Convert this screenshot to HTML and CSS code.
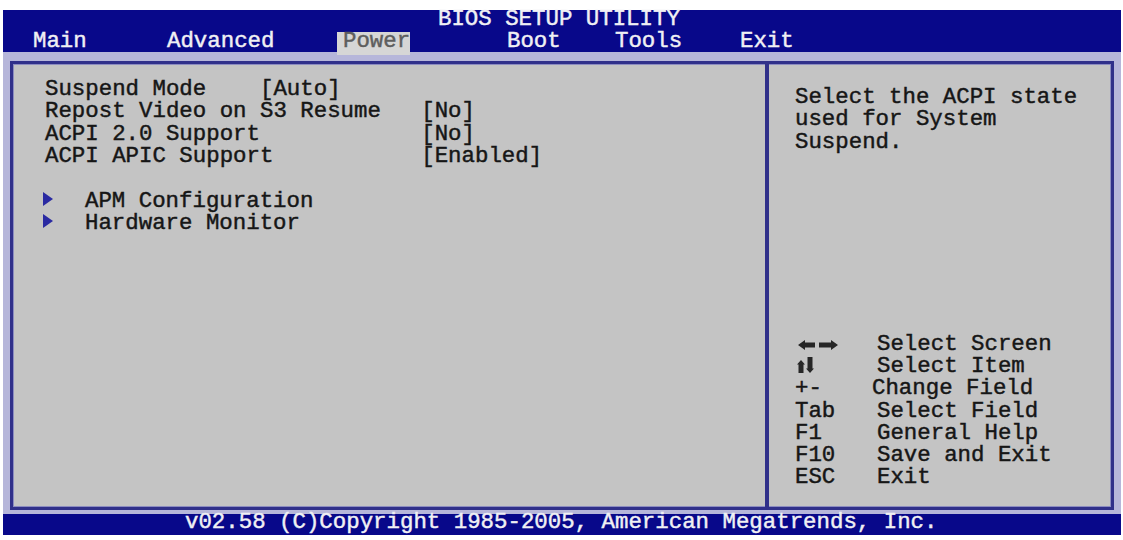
FILE: index.html
```html
<!DOCTYPE html>
<html lang="en">
<head>
    <meta charset="UTF-8">
    <meta name="viewport" content="width=device-width, initial-scale=1.0">
    <title>BIOS Setup Utility - Power</title>
    <link rel="stylesheet" href="styles.css">
</head>
<body>
    <div class="screen">
        <header class="topbar">
            <div class="title">BIOS SETUP UTILITY</div>
            <nav class="menu">
                <span class="tab tab-main">Main</span>
                <span class="tab tab-advanced">Advanced</span>
                <span class="tab tab-power active">Power</span>
                <span class="tab tab-boot">Boot</span>
                <span class="tab tab-tools">Tools</span>
                <span class="tab">Exit</span>
            </nav>
        </header>

        <div class="frame">
            <section class="options">
                <div class="opt"><span class="opt-label short">Suspend Mode</span><span>[Auto]</span></div>
                <div class="opt"><span class="opt-label">Repost Video on S3 Resume</span><span>[No]</span></div>
                <div class="opt"><span class="opt-label">ACPI 2.0 Support</span><span>[No]</span></div>
                <div class="opt"><span class="opt-label">ACPI APIC Support</span><span>[Enabled]</span></div>
                <div class="opt blank"></div>
                <div class="submenu">
                    <svg class="pointer" width="10" height="14" viewBox="0 0 10 14"><polygon points="0,0 10,7 0,14"/></svg>
                    <span>APM Configuration</span>
                </div>
                <div class="submenu">
                    <svg class="pointer" width="10" height="14" viewBox="0 0 10 14"><polygon points="0,0 10,7 0,14"/></svg>
                    <span>Hardware Monitor</span>
                </div>
            </section>

            <aside class="help">
                <p class="help-text">Select the ACPI state used for System Suspend.</p>

                <div class="keys">
                    <span class="key">
                        <svg class="glyph lr" width="40" height="10" viewBox="0 0 40 10">
                            <polygon points="0,5 7,0 7,2.5 17,2.5 17,7.5 7,7.5 7,10"/>
                            <polygon points="40,5 33,0 33,2.5 21,2.5 21,7.5 33,7.5 33,10"/>
                        </svg>
                    </span>
                    <span>Select Screen</span>
                    <span class="key">
                        <svg class="glyph ud" width="17" height="17" viewBox="0 0 17 17">
                            <polygon points="4,3 8,7.5 6.5,7.5 6.5,16 1.5,16 1.5,7.5 0,7.5"/>
                            <polygon points="13,16 17,11.5 15.5,11.5 15.5,0 10.5,0 10.5,11.5 9,11.5"/>
                        </svg>
                    </span>
                    <span>Select Item</span>
                    <span class="key">+-</span>
                    <span class="shift">Change Field</span>
                    <span class="key">Tab</span>
                    <span>Select Field</span>
                    <span class="key">F1</span>
                    <span>General Help</span>
                    <span class="key">F10</span>
                    <span>Save and Exit</span>
                    <span class="key">ESC</span>
                    <span>Exit</span>
                </div>
            </aside>
        </div>

        <footer class="statusbar">v02.58 (C)Copyright 1985-2005, American Megatrends, Inc.</footer>
    </div>
</body>
</html>
```

FILE: styles.css
```css
body {
    margin: 0;
    background: #ffffff;
    font-family: "Liberation Mono", "Courier New", monospace;
    font-size: 22.4px;
    color: #161616;
    /* a little heavier than the regular face, lighter than bold */
    -webkit-text-stroke: 0.45px currentColor;
}

.screen {
    margin: 10px 2px 0 3px;
    width: 1118px;
    height: 525px;
    background: #b6b6da;
    display: flex;
    flex-direction: column;
}

/* top title + menu bar */
.topbar {
    height: 42px;
    flex-shrink: 0;
    background: #08088a;
    color: #f0f0f4;
}

.title {
    height: 18px;
    line-height: 18px;
    padding-left: 435px;
}

.menu {
    display: flex;
    margin-top: 4px;
    padding-left: 30px;
    line-height: 18px;
}

.tab {
    box-sizing: border-box;
}

.tab-main { width: 134px; }
.tab-advanced { width: 170px; }
.tab-boot { width: 108px; }
.tab-tools { width: 125px; }

.tab.active {
    width: 73px;
    margin-right: 97px;
    padding: 0 0 5px 6px;
    background: #d6d6d6;
    color: #5e5e5e;
}

/* main double-lined frame */
.frame {
    box-sizing: border-box;
    height: 449px;
    margin: 9px 7px 0 7px;
    display: flex;
    background: #c4c4c4;
    border: 3px solid #30308a;
    box-shadow: inset 0 0 0 1px #8c8cc0;
}

.options {
    width: 752px;
    padding: 13.8px 0 0 32px;
    box-sizing: border-box;
    line-height: 22.4px;
}

.opt {
    display: flex;
    white-space: pre;
}

.opt.blank {
    height: 22.4px;
}

.opt-label {
    width: 28ch;
}

.opt-label.short {
    width: 16ch;
}

.submenu {
    display: flex;
}

.pointer {
    flex-shrink: 0;
    margin: 2px 32px 0 -2px;
    fill: #2a2aa2;
}

.help {
    flex: 1;
    display: flex;
    flex-direction: column;
    justify-content: space-between;
    padding: 21.8px 0 18.7px 26px;
    border-left: 4px solid #30308a;
}

.help-text {
    margin: 0;
    width: 22ch;
    line-height: 22.4px;
}

.keys {
    display: grid;
    grid-template-columns: 82px auto;
    line-height: 22.2px;
}

.shift {
    margin-left: -5px;
}

.glyph {
    fill: #262626;
    filter: blur(0.7px);
}

.glyph.lr {
    margin-left: 3px;
}

.glyph.ud {
    margin-left: 2px;
    vertical-align: -2px;
}

.statusbar {
    height: 21px;
    flex-shrink: 0;
    margin-top: 4px;
    padding-left: 182px;
    line-height: 16px;
    background: #08088a;
    color: #f0f0f4;
    white-space: pre;
}
```
